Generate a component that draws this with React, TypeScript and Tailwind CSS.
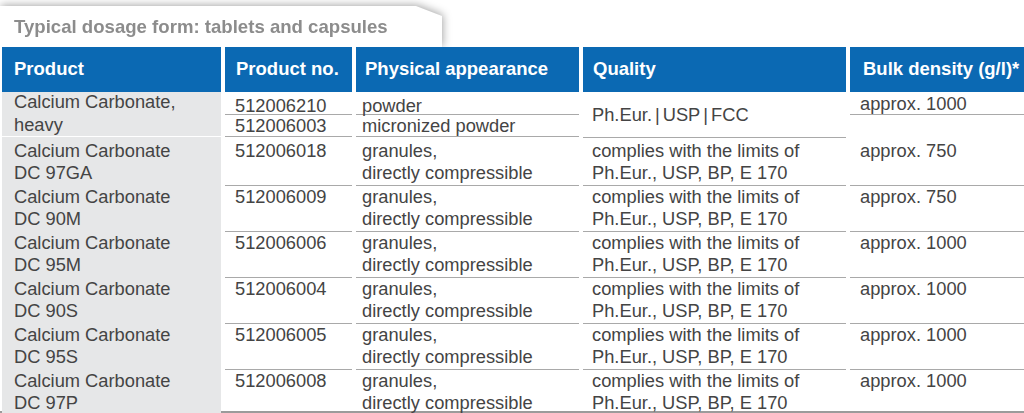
import React from 'react'

type Row = {
  name: string[]
  no: string
  appearance: string[]
  quality: string[]
  density: string
}

const limits = ['complies with the limits of', 'Ph.Eur., USP, BP, E 170']
const granules = ['granules,', 'directly compressible']

const rows: Row[] = [
  { name: ['Calcium Carbonate', 'DC 97GA'], no: '512006018', appearance: granules, quality: limits, density: 'approx. 750' },
  { name: ['Calcium Carbonate', 'DC 90M'], no: '512006009', appearance: granules, quality: limits, density: 'approx. 750' },
  { name: ['Calcium Carbonate', 'DC 95M'], no: '512006006', appearance: granules, quality: limits, density: 'approx. 1000' },
  { name: ['Calcium Carbonate', 'DC 90S'], no: '512006004', appearance: granules, quality: limits, density: 'approx. 1000' },
  { name: ['Calcium Carbonate', 'DC 95S'], no: '512006005', appearance: granules, quality: limits, density: 'approx. 1000' },
  { name: ['Calcium Carbonate', 'DC 97P'], no: '512006008', appearance: granules, quality: limits, density: 'approx. 1000' },
]

const grid = 'grid grid-cols-[219px_127px_223px_263px_174px] gap-x-[4px] pl-[2px]'
const line = 'border-b border-[#a9a9a9]'

function Lines({ items }: { items: string[] }) {
  return (
    <>
      {items.map((t) => (
        <div key={t} className="whitespace-nowrap">{t}</div>
      ))}
    </>
  )
}

// gray product cell, white gap underneath
function NameCell({ children, last }: { children: React.ReactNode; last?: boolean }) {
  return (
    <div className={`flex flex-col ${last ? '' : 'pb-[2px]'}`}>
      <div className="flex-1 bg-[#e6e7e8] pl-[12px]">{children}</div>
    </div>
  )
}

export default function App() {
  return (
    <div className="w-[1024px] h-[413px] overflow-hidden bg-white font-['Liberation_Sans',Arial,sans-serif] text-[18.3px] text-[#444]">
      {/* title tab */}
      <div className="h-[47px] pt-[6px] drop-shadow-[1px_-1px_4px_rgba(0,0,0,0.35)]">
        <div className="h-[41px] w-[442px] bg-white pl-[14px] pt-[10px] [clip-path:polygon(0_0,416px_0,442px_10px,442px_100%,0_100%)]">
          <div className="text-[18.6px] leading-[22px] font-bold text-[#8c8c8c] whitespace-nowrap">
            Typical dosage form: tablets and capsules
          </div>
        </div>
      </div>

      {/* header */}
      <div className={`${grid} relative z-10 h-[45px] text-white font-bold text-[18.5px] bg-white`}>
        <div className="bg-[#0b69b3] flex items-center pl-[12px] pb-[2px]">Product</div>
        <div className="bg-[#0b69b3] flex items-center pl-[11px] pb-[2px]">Product no.</div>
        <div className="bg-[#0b69b3] flex items-center pl-[9px] pb-[2px]">Physical appearance</div>
        <div className="bg-[#0b69b3] flex items-center pl-[10px] pb-[2px]">Quality</div>
        <div className="bg-[#0b69b3] flex items-center pl-[13px] pb-[2px]">Bulk density (g/l)*</div>
      </div>

      {/* first row with two variants */}
      <div className={`${grid} h-[45px] leading-[23px]`}>
        <NameCell>
          <div className="-mt-[2px]">
            <Lines items={['Calcium Carbonate,', 'heavy']} />
          </div>
        </NameCell>
        <div className="flex flex-col">
          <div className={`h-[23px] ${line} flex items-end pl-[10px] leading-[16px]`}>512006210</div>
          <div className={`h-[22px] ${line} flex items-end pl-[10px] pb-[2px] leading-[16px]`}>512006003</div>
        </div>
        <div className="flex flex-col">
          <div className={`h-[23px] ${line} flex items-end pl-[6px] leading-[16px]`}>powder</div>
          <div className={`h-[22px] ${line} flex items-end pl-[6px] pb-[2px] leading-[16px]`}>micronized powder</div>
        </div>
        <div className={`${line} flex items-center pl-[9px] whitespace-nowrap`}>
          Ph.Eur.<span className="mx-[3px]">|</span>USP<span className="mx-[3px]">|</span>FCC
        </div>
        <div className="flex flex-col">
          <div className={`h-[23px] ${line} flex items-end pl-[10px] pb-[2px] leading-[16px]`}>approx. 1000</div>
          <div className="h-[22px]" />
        </div>
      </div>

      {/* remaining rows */}
      {rows.map((r, i) => {
        const last = i === rows.length - 1
        return (
          <div
            key={r.no}
            className={`${grid} h-[46px] leading-[22px] ${last ? 'border-b-2 border-[#9b9b9b]' : ''}`}
          >
            <NameCell last={last}>
              <div className="pt-[3px]">
                <Lines items={r.name} />
              </div>
            </NameCell>
            <div className={`pl-[10px] pt-[3px] ${last ? '' : line}`}>{r.no}</div>
            <div className={`pl-[6px] pt-[3px] ${last ? '' : line}`}>
              <Lines items={r.appearance} />
            </div>
            <div className={`pl-[9px] pt-[3px] ${last ? '' : line}`}>
              <Lines items={r.quality} />
            </div>
            <div className={`pl-[10px] pt-[3px] ${last ? '' : line}`}>{r.density}</div>
          </div>
        )
      })}
    </div>
  )
}
